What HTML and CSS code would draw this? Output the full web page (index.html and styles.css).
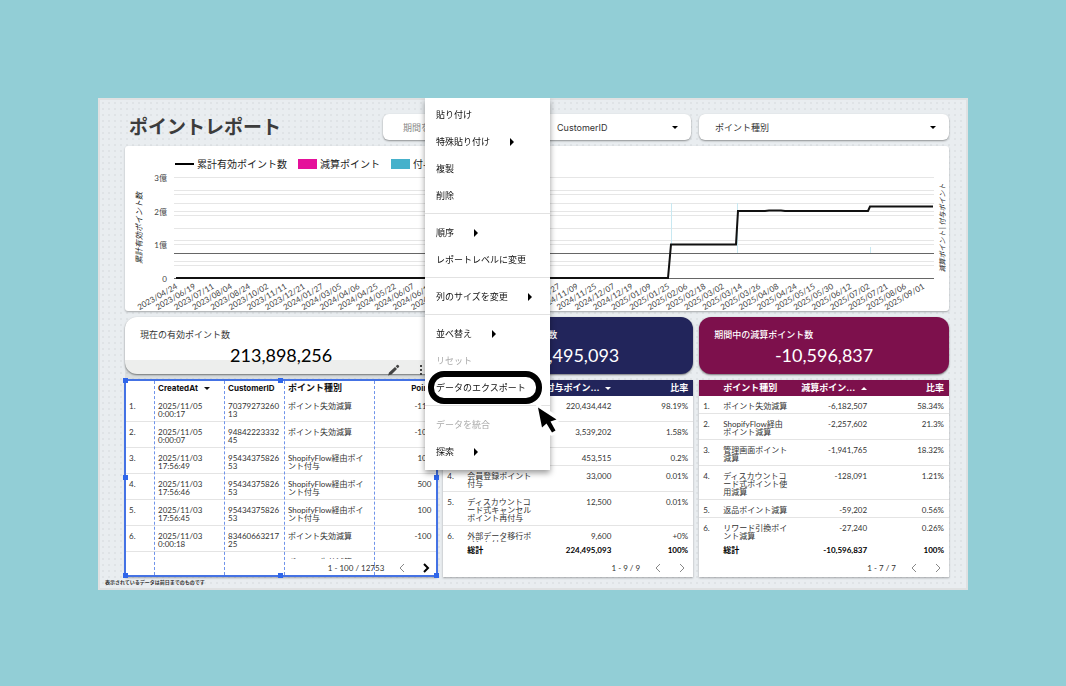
FILE: index.html
```html
<!DOCTYPE html>
<html lang="ja">
<head>
    <meta charset="UTF-8">
    <meta name="viewport" content="width=device-width, initial-scale=1.0">
    <title>ポイントレポート</title>
    <link rel="stylesheet" href="styles.css">
</head>
<body>
    <main class="report">
        <div class="dashboard">
            <header class="report-header">
                <h1>ポイントレポート</h1>
                <button class="filter filter-date" type="button">期間を選択</button>
                <div class="filter">
                    <select aria-label="CustomerID"><option>CustomerID</option></select>
                </div>
                <div class="filter">
                    <select aria-label="ポイント種別"><option>ポイント種別</option></select>
                </div>
            </header>

            <section class="chart-card">
                <div class="legend">
                    <span class="legend-item"><i class="swatch swatch-line"></i>累計有効ポイント数</span>
                    <span class="legend-item"><i class="swatch swatch-minus"></i>減算ポイント</span>
                    <span class="legend-item"><i class="swatch swatch-plus"></i>付与ポイント</span>
                </div>
                <svg class="chart" viewBox="0 24 824 141">
                    <path class="grid-line" d="M49 31.5H809M49 44.5H809M49 48.5H809M49 57.5H809M49 65.5H809M49 69.5H809M49 82.5H809M49 94.5H809M49 98.5H809M49 115.5H809M49 119.5H809"/>
                    <path class="zero-line" d="M49 107.5H809M49 132.5H809"/>
                    <path class="plus-bar" d="M546.5 57V98M612.5 57V107M745.5 101V107"/>
                    <path class="total-line" d="M51 132H543L546 98.500H611L613 65H640L644 64.500H656L660 65H743L745 60.500H808"/>
                    <g class="axis-y">
                        <text x="42" y="35">3億</text>
                        <text x="42" y="69">2億</text>
                        <text x="42" y="102">1億</text>
                        <text x="42" y="136">0</text>
                    </g>
                    <text class="axis-title" transform="translate(17 82) rotate(-90)">累計有効ポイント数</text>
                    <text class="axis-title axis-title-right" transform="translate(820 82) rotate(-90)">減算ポイント | 付与ポイント</text>
                    <g class="axis-x" id="axis-x"></g>
                </svg>
            </section>

            <section class="columns">
                <div class="score">
                    <h2>現在の有効ポイント数</h2>
                    <p>213,898,256</p>
                    <div class="chart-tools">
                        <button type="button" aria-label="編集">
                            <svg width="12" height="12" viewBox="0 0 12 12"><path d="M0 11.500l1-3 6-5.500 2 2L3.500 10.500zM7.700 2.300l1.300-1.300q.6-.5 1.200 0l.8.8q.5.600 0 1.200l-1.300 1.300z"/></svg>
                        </button>
                        <button type="button" aria-label="メニュー">
                            <svg width="12" height="12" viewBox="0 0 12 12"><path d="M5 1h2v2H5zM5 5h2v2H5zM5 9h2v2H5z"/></svg>
                        </button>
                    </div>
                </div>
                <div class="score score-navy">
                    <h2>期間中の付与ポイント数</h2>
                    <p>224,495,093</p>
                </div>
                <div class="score score-wine">
                    <h2>期間中の減算ポイント数</h2>
                    <p>-10,596,837</p>
                </div>
            </section>

            <section class="columns">
                <div class="table-card table-selected">
                    <div class="table-body">
                        <table>
                            <colgroup><col class="w-no"><col class="w-date"><col class="w-id"><col class="w-type"><col></colgroup>
                            <thead>
                                <tr><th></th><th>CreatedAt <i class="sort sort-down"></i></th><th>CustomerID</th><th class="ja">ポイント種別</th><th class="num">Point</th></tr>
                            </thead>
                            <tbody>
                                <tr><td>1.</td><td>2025/11/05<br>0:00:17</td><td>7037927326013</td><td class="type">ポイント失効減算</td><td class="num">-110</td></tr>
                                <tr><td>2.</td><td>2025/11/05<br>0:00:07</td><td>9484222333245</td><td class="type">ポイント失効減算</td><td class="num">-100</td></tr>
                                <tr><td>3.</td><td>2025/11/03<br>17:56:49</td><td>9543437582653</td><td class="type">ShopifyFlow経由ポイント付与</td><td class="num">100</td></tr>
                                <tr><td>4.</td><td>2025/11/03<br>17:56:46</td><td>9543437582653</td><td class="type">ShopifyFlow経由ポイント付与</td><td class="num">500</td></tr>
                                <tr><td>5.</td><td>2025/11/03<br>17:56:45</td><td>9543437582653</td><td class="type">ShopifyFlow経由ポイント付与</td><td class="num">100</td></tr>
                                <tr><td>6.</td><td>2025/11/03<br>0:00:18</td><td>8346066321725</td><td class="type">ポイント失効減算</td><td class="num">-100</td></tr>
                                <tr><td>7.</td><td>2025/11/02<br>0:00:12</td><td>9437947596421</td><td class="type">ポイント失効減算</td><td class="num">-500</td></tr>
                            </tbody>
                        </table>
                    </div>
                    <div class="pager">
                        <span>1 - 100 / 12753</span>
                        <button type="button" aria-label="前へ"><svg width="12" height="12" viewBox="0 0 12 12"><path d="M8 2L4 6l4 4"/></svg></button>
                        <button class="active" type="button" aria-label="次へ"><svg width="12" height="12" viewBox="0 0 12 12"><path d="M4 2l4 4-4 4"/></svg></button>
                    </div>
                    <div class="selection">
                        <i></i><i></i><i></i><i></i><i></i>
                        <b class="handle h-nw"></b><b class="handle h-n"></b><b class="handle h-w"></b><b class="handle h-e"></b>
                        <b class="handle h-sw"></b><b class="handle h-s"></b><b class="handle h-se"></b>
                    </div>
                </div>

                <div class="table-card table-navy">
                    <div class="table-body">
                        <table>
                            <colgroup><col class="w-rank"><col class="w-name"><col class="w-value"><col></colgroup>
                            <thead>
                                <tr><th></th><th class="ja">ポイント種別</th><th class="num ja">付与ポイン… <i class="sort sort-down"></i></th><th class="num ja">比率</th></tr>
                            </thead>
                            <tbody>
                                <tr><td>1.</td><td>ShopifyFlow経由ポイント付与</td><td class="num">220,434,442</td><td class="num">98.19%</td></tr>
                                <tr><td>2.</td><td>管理画面ポイント付与</td><td class="num">3,539,202</td><td class="num">1.58%</td></tr>
                                <tr><td>3.</td><td>返品ポイント</td><td class="num">453,515</td><td class="num">0.2%</td></tr>
                                <tr><td>4.</td><td>会員登録ポイント付与</td><td class="num">33,000</td><td class="num">0.01%</td></tr>
                                <tr><td>5.</td><td>ディスカウントコード式キャンセルポイント再付与</td><td class="num">12,500</td><td class="num">0.01%</td></tr>
                                <tr><td>6.</td><td>外部データ移行ポイント付与</td><td class="num">9,600</td><td class="num">+0%</td></tr>
                            </tbody>
                            <tfoot>
                                <tr><td></td><td>総計</td><td class="num">224,495,093</td><td class="num">100%</td></tr>
                            </tfoot>
                        </table>
                    </div>
                    <div class="pager">
                        <span>1 - 9 / 9</span>
                        <button type="button" aria-label="前へ"><svg width="12" height="12" viewBox="0 0 12 12"><path d="M8 2L4 6l4 4"/></svg></button>
                        <button type="button" aria-label="次へ"><svg width="12" height="12" viewBox="0 0 12 12"><path d="M4 2l4 4-4 4"/></svg></button>
                    </div>
                </div>

                <div class="table-card table-wine">
                    <div class="table-body">
                        <table>
                            <colgroup><col class="w-rank"><col class="w-name"><col class="w-value"><col></colgroup>
                            <thead>
                                <tr><th></th><th class="ja">ポイント種別</th><th class="num ja">減算ポイン… <i class="sort sort-up"></i></th><th class="num ja">比率</th></tr>
                            </thead>
                            <tbody>
                                <tr><td>1.</td><td>ポイント失効減算</td><td class="num">-6,182,507</td><td class="num">58.34%</td></tr>
                                <tr><td>2.</td><td>ShopifyFlow経由ポイント減算</td><td class="num">-2,257,602</td><td class="num">21.3%</td></tr>
                                <tr><td>3.</td><td>管理画面ポイント減算</td><td class="num">-1,941,765</td><td class="num">18.32%</td></tr>
                                <tr><td>4.</td><td>ディスカウントコード式ポイント使用減算</td><td class="num">-128,091</td><td class="num">1.21%</td></tr>
                                <tr><td>5.</td><td>返品ポイント減算</td><td class="num">-59,202</td><td class="num">0.56%</td></tr>
                                <tr><td>6.</td><td>リワード引換ポイント減算</td><td class="num">-27,240</td><td class="num">0.26%</td></tr>
                            </tbody>
                            <tfoot>
                                <tr><td></td><td>総計</td><td class="num">-10,596,837</td><td class="num">100%</td></tr>
                            </tfoot>
                        </table>
                    </div>
                    <div class="pager">
                        <span>1 - 7 / 7</span>
                        <button type="button" aria-label="前へ"><svg width="12" height="12" viewBox="0 0 12 12"><path d="M8 2L4 6l4 4"/></svg></button>
                        <button type="button" aria-label="次へ"><svg width="12" height="12" viewBox="0 0 12 12"><path d="M4 2l4 4-4 4"/></svg></button>
                    </div>
                </div>
            </section>
        </div>
        <p class="note">表示されているデータは前日までのものです</p>

        <!-- 右クリックメニュー -->
        <div class="context-menu">
            <button type="button">貼り付け</button>
            <button class="has-sub" type="button">特殊貼り付け</button>
            <button type="button">複製</button>
            <button type="button">削除</button>
            <hr>
            <button class="has-sub" type="button">順序</button>
            <button type="button">レポートレベルに変更</button>
            <hr>
            <button class="has-sub" type="button">列のサイズを変更</button>
            <hr>
            <button class="has-sub" type="button">並べ替え</button>
            <button type="button" disabled>リセット</button>
            <button class="export" type="button">データのエクスポート</button>
            <hr>
            <button type="button" disabled>データを統合</button>
            <button class="has-sub" type="button">探索</button>
            <svg class="cursor" width="26" height="32" viewBox="0 0 26 32">
                <path class="cursor-halo" d="M3.500 4L7 23l5-4 5 9 3-2-4.500-9 5.500-2z"/>
                <path d="M3 3.500L7 23.500l4.500-4L17 28.500l3.500-2L15.500 17.500l6-2z"/>
            </svg>
        </div>
    </main>
    <script src="chart.js"></script>
</body>
</html>
```
FILE: styles.css
```css
* {
    margin: 0;
    padding: 0;
    box-sizing: border-box;
}

body {
    font-family: Lato, "Noto Sans CJK JP", sans-serif;
    background: #92ced6;
    color: #333;
    padding: 98px;
}

button,
select {
    font-family: inherit;
    border: none;
    background: none;
    color: inherit;
    cursor: pointer;
}

.report {
    position: relative;
    border: 2px solid #dfe1e2;
    background: #e9edf0 radial-gradient(circle, #dfe3e6 1px, transparent 1px) 0 0 / 6px 6px;
}

.dashboard {
    display: flex;
    flex-direction: column;
    gap: 6px;
    padding: 14px 17px 0 25px;
}

/* ヘッダー */
.report-header {
    display: grid;
    grid-template-columns: 5fr 3fr 3fr 5fr;
    gap: 8px;
}

h1 {
    font-size: 19px;
    line-height: 26px;
    padding-left: 4px;
    color: #3c3c3c;
    white-space: nowrap;
}

.filter {
    position: relative;
    height: 26px;
    border-radius: 6px;
    background: #fff;
    box-shadow: 0 1px 2px rgba(0, 0, 0, 0.4);
}

.filter select {
    appearance: none;
    width: 100%;
    height: 26px;
    padding: 0 16px;
    font-family: Inter, "Noto Sans CJK JP", sans-serif;
    font-size: 9px;
}

.filter-date {
    padding: 0 20px;
    font-size: 9px;
    text-align: left;
    color: #888;
}

.filter:not(.filter-date)::after {
    content: "";
    position: absolute;
    right: 13px;
    top: 12px;
    border: 3px solid transparent;
    border-top-color: #000;
    border-bottom: none;
}

/* グラフ */
.chart-card {
    background: #fff;
    border-radius: 3px;
    box-shadow: 0 1px 2px rgba(0, 0, 0, 0.3);
}

.legend {
    display: flex;
    gap: 11px;
    height: 24px;
    padding: 11px 0 0 50px;
}

.legend-item {
    display: flex;
    align-items: center;
    gap: 3px;
    height: 13px;
    font-size: 10px;
    color: #222;
}

.swatch {
    width: 19px;
    height: 10px;
}

.swatch-line {
    height: 2px;
    background: #000;
}

.swatch-minus {
    background: #e5109a;
}

.swatch-plus {
    background: #46b1cb;
}

.chart {
    display: block;
    width: 100%;
    font-size: 8px;
    fill: #444;
}

.grid-line {
    stroke: #e6e6e6;
}

.zero-line {
    stroke: #666;
}

.plus-bar {
    stroke: #c8e8f1;
}

.total-line {
    fill: none;
    stroke: #111;
    stroke-width: 2;
}

.axis-y,
.axis-x {
    text-anchor: end;
}

.axis-title {
    font-style: italic;
    text-anchor: middle;
    fill: #222;
}

.axis-title-right {
    font-size: 7px;
}

/* スコアカードと表 */
.columns {
    display: grid;
    grid-template-columns: 5fr 4fr 4fr;
    gap: 6px;
}

.score {
    position: relative;
    padding: 11px 15px 7px;
    border-radius: 12px;
    background: #fff;
    box-shadow: 0 1px 2px rgba(0, 0, 0, 0.5);
}

.score h2 {
    font-size: 9px;
    font-weight: normal;
    line-height: 13px;
    margin-bottom: 2px;
}

.score p {
    font-size: 18px;
    line-height: 24px;
    text-align: center;
    color: #000;
}

.score-navy,
.score-wine {
    color: #fff;
}

.score-navy {
    background: #22255b;
}

.score-wine {
    background: #7d104c;
}

.score-navy h2,
.score-wine h2 {
    font-weight: 500;
}

.score-navy p,
.score-wine p {
    color: #fff;
}

.chart-tools {
    position: absolute;
    left: 0;
    right: 0;
    bottom: -6px;
    height: 20px;
    display: flex;
    justify-content: flex-end;
    gap: 15px;
    padding: 4px 10px;
    background: rgba(50, 70, 60, 0.09);
}

.chart-tools svg {
    display: block;
    fill: #444;
}

.table-card {
    position: relative;
    background: #fff;
    box-shadow: 0 1px 2px rgba(0, 0, 0, 0.3);
}

.table-body {
    height: 179px;
    overflow: hidden;
}

table {
    width: 100%;
    table-layout: fixed;
    border-collapse: separate;
    border-spacing: 0;
    font-size: 8px;
    line-height: 8px;
}

.w-no { width: 29px; }
.w-date { width: 70px; }
.w-id { width: 60px; }
.w-type { width: 90px; }
.w-rank { width: 20px; }
.w-name { width: 74px; }
.w-value { width: 79px; }

th {
    height: 16px;
    padding: 0 2px 0 4px;
    font-family: Inter, "Noto Sans CJK JP", sans-serif;
    text-align: left;
    white-space: nowrap;
    color: #111;
}

th.ja {
    font-size: 9px;
}

td {
    padding: 6px 4px 3px;
    border-bottom: 1px solid #e4e4e4;
    vertical-align: top;
    word-break: break-all;
}

.table-selected td {
    padding-right: 2px;
}

.table-selected .type {
    padding-right: 6px;
}

tbody tr:last-child td {
    border-bottom: none;
}

th.num,
td.num {
    padding-left: 0;
    padding-right: 5px;
    text-align: right;
}

.table-selected .num {
    padding-right: 6px;
}

tfoot {
    position: sticky;
    bottom: 0;
    background: #fff;
}

tfoot td {
    height: 17px;
    padding-top: 4px;
    border-bottom: none;
    font-weight: bold;
    color: #000;
}

.table-navy th {
    background: #22255b;
    color: #fff;
}

.table-wine th {
    background: #7d104c;
    color: #fff;
}

.sort {
    display: inline-block;
    margin-left: 4px;
    border: 3px solid transparent;
    vertical-align: middle;
}

.sort-down {
    border-top-color: currentColor;
    border-bottom: none;
}

.sort-up {
    border-bottom-color: currentColor;
    border-top: none;
}

.pager {
    display: flex;
    justify-content: flex-end;
    align-items: center;
    gap: 12px;
    height: 18px;
    padding-right: 5px;
    font-size: 8px;
}

.pager svg {
    display: block;
    fill: none;
    stroke: #888;
}

.pager .active svg {
    stroke: #000;
    stroke-width: 2;
}

/* 選択枠 */
.selection {
    position: absolute;
    inset: -1px -1px 0;
    display: grid;
    grid-template-columns: 28px 70px 60px 90px 1fr;
    border: 2px solid #4472e4;
    pointer-events: none;
}

.selection i + i {
    border-left: 1px dashed #6f93ea;
}

.handle {
    position: absolute;
    width: 5px;
    height: 5px;
    margin: -3px;
    background: #2f66ea;
}

.h-nw { left: 0; top: 0; }
.h-n { left: 50%; top: 0; }
.h-w { left: 0; top: 50%; }
.h-e { right: 0; top: 50%; }
.h-sw { left: 0; bottom: 0; }
.h-s { left: 50%; bottom: 0; }
.h-se { right: 0; bottom: 0; }

.note {
    padding-left: 5px;
    font-size: 5px;
    font-weight: bold;
    line-height: 11px;
}

/* コンテキストメニュー */
.context-menu {
    position: absolute;
    left: 325px;
    top: -2px;
    width: 125px;
    padding: 3px 0 5px;
    display: flex;
    flex-direction: column;
    background: #fff;
    box-shadow: 0 3px 6px rgba(0, 0, 0, 0.4);
    clip-path: inset(0 -10px -10px -10px);
}

.context-menu button {
    display: flex;
    align-items: center;
    gap: 20px;
    height: 27px;
    padding: 0 11px;
    font-size: 9px;
    white-space: nowrap;
    color: #111;
}

.context-menu button:disabled {
    color: #aaa;
}

.context-menu hr {
    margin: 4px 0 5px;
    border: none;
    border-top: 1px solid #e2e2e2;
}

.has-sub::after {
    content: "";
    border: 4px solid transparent;
    border-left-color: #000;
    border-right: none;
}

.context-menu .export {
    position: relative;
}

.export::before {
    content: "";
    position: absolute;
    inset: -3px 8px -3px 3px;
    border: 6px solid #000;
    border-radius: 16px;
}

.cursor {
    position: absolute;
    left: 110px;
    top: 306px;
}

.cursor-halo {
    fill: #fff;
    stroke: #fff;
    stroke-width: 7;
    stroke-linejoin: round;
}
```
FILE: chart.js
```js
// X軸の日付ラベル
const dates = [
    '2023/04/24', '2023/06/19', '2023/07/11', '2023/08/04', '2023/08/24', '2023/10/02',
    '2023/11/11', '2023/12/21', '2024/01/27', '2024/03/05', '2024/04/06', '2024/04/25',
    '2024/05/22', '2024/06/07', '2024/06/19', '2024/07/05', '2024/07/24', '2024/08/09',
    '2024/08/28', '2024/09/14', '2024/10/08', '2024/10/27', '2024/11/09', '2024/11/25',
    '2024/12/07', '2024/12/19', '2025/01/09', '2025/01/25', '2025/02/06', '2025/02/18',
    '2025/03/02', '2025/03/14', '2025/03/26', '2025/04/08', '2025/04/24', '2025/05/15',
    '2025/05/30', '2025/06/12', '2025/07/02', '2025/07/21', '2025/08/06', '2025/09/01'
];

const axis = document.getElementById('axis-x');
const step = (800 - 53) / (dates.length - 1);

dates.forEach((date, i) => {
    const label = document.createElementNS('http://www.w3.org/2000/svg', 'text');
    label.setAttribute('transform', `translate(${53 + i * step} 142) rotate(-30)`);
    label.textContent = date;
    axis.appendChild(label);
});
```
